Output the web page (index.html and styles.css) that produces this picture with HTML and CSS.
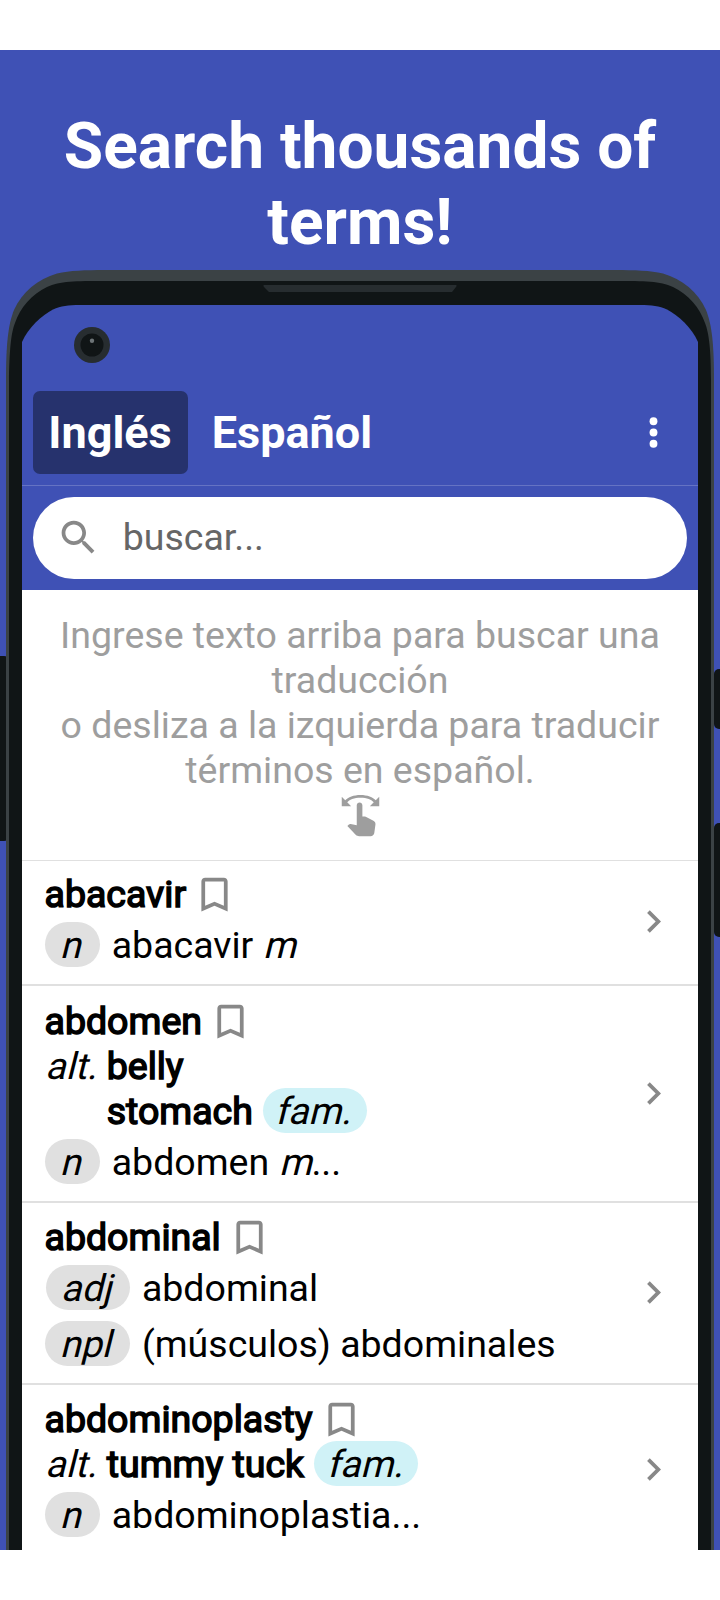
FILE: index.html
```html
<!DOCTYPE html>
<html lang="es">
<head>
<meta charset="utf-8">
<title>Search thousands of terms!</title>
<link rel="stylesheet" href="styles.css">
</head>
<body>
<svg class="defs" aria-hidden="true">
  <symbol id="bookmark" viewBox="0 0 24 24"><path d="M17 3H7c-1.1 0-1.99.9-1.99 2L5 21l7-3 7 3V5c0-1.1-.9-2-2-2zm0 15l-5-2.18L7 18V5h10v13z"/></symbol>
  <symbol id="chevron" viewBox="0 0 24 24"><path d="M10 6L8.59 7.41 13.17 12l-4.58 4.59L10 18l6-6z"/></symbol>
</svg>
<main class="poster">
  <h1 class="title">Search thousands of terms!</h1>
  <div class="phone">
    <svg class="shell" viewBox="0 0 720 1280" aria-hidden="true">
      <g fill="#101516">
        <rect x="-8" y="386" width="16" height="185" rx="4"/>
        <rect x="714" y="399" width="16" height="60" rx="5"/>
        <rect x="714" y="553" width="16" height="114" rx="5"/>
      </g>
      <path fill="#3b4245" d="M6 1280V110C6 75 8 55 14 40C22 22 38 9 57 3.5C70 .5 85 0 105 0H615C635 0 650 .5 663 3.5C682 9 698 22 706 40C712 55 714 75 714 110V1280z"/>
      <path fill="#101516" d="M9 1280V110C9.500 80 11 63 15 53C20 38 32 24 47 17C60 11 75 11 105 11H615C645 11 660 11 673 17C688 24 700 38 705 53C709 63 711 80 711 110V1280z"/>
      <path fill="#272d30" d="M264 15H456Q457.500 15.500 456 17L452 22H269L264 17Q262.500 15.500 264 15z"/>
      <path fill="#3f51b5" d="M22 120V72C28 58 42 45 53 39.500C61 36 68 35 80 35H640C652 35 659 36 667 39.500C678 45 692 58 698 72V120z"/>
      <circle cx="92" cy="75" r="18" fill="#272d30"/>
      <circle cx="92" cy="75" r="11.500" fill="#101516"/>
      <circle cx="92" cy="70.800" r="2.200" fill="#6d7477"/>
    </svg>
    <div class="screen">
      <header class="bar">
        <nav class="tabs">
          <span class="tab tab-on">Inglés</span>
          <span class="tab">Español</span>
        </nav>
        <svg class="icon more" viewBox="0 0 24 24"><circle cx="12" cy="6" r="2.100"/><circle cx="12" cy="12" r="2.100"/><circle cx="12" cy="18" r="2.100"/></svg>
      </header>
      <div class="search-bar">
        <div class="search">
          <svg class="icon" viewBox="0 0 24 24"><path d="M15.500 14h-.79l-.28-.27C15.410 12.590 16 11.110 16 9.500 16 5.910 13.090 3 9.500 3S3 5.910 3 9.500 5.910 16 9.500 16c1.610 0 3.090-.59 4.230-1.570l.27.28v.79l5 4.990L20.490 19l-4.990-5zm-6 0C7.010 14 5 11.990 5 9.500S7.010 5 9.500 5 14 7.010 14 9.500 11.990 14 9.500 14z"/></svg>
          <span class="placeholder">buscar...</span>
        </div>
      </div>
      <section class="hint">
        <p class="hint-text">Ingrese texto arriba para buscar una<br>traducción<br>o desliza a la izquierda para traducir<br>términos en español.</p>
        <svg class="icon swipe" viewBox="0 0 24 24"><path d="M18.890 14.750l-4.090-2.040c-.28-.14-.58-.21-.89-.21H13v-6C13 5.670 12.330 5 11.500 5S10 5.670 10 6.500v10.740L6.750 16.500c-.33-.07-.68.03-.92.28L5 17.620l4.540 4.790C9.920 22.790 10.680 23 11.210 23h6.160c1 0 1.840-.73 1.980-1.720l.63-4.460C20.100 15.970 19.660 15.140 18.890 14.750zM20.130 3.870C18.690 2.170 15.600 1 12 1S5.310 2.170 3.870 3.870L2 2v5h5L4.930 4.930c1-1.290 3.700-2.430 7.070-2.430s6.070 1.140 7.070 2.430L17 7h5V2L20.130 3.870z"/></svg>
      </section>
      <ul class="list">
        <li class="row">
          <div class="entry">
            <div class="head"><b class="term">abacavir</b><svg class="icon"><use href="#bookmark"/></svg></div>
            <div class="senses"><span class="chip"><i>n</i></span><span>abacavir <i>m</i></span></div>
          </div>
          <svg class="icon"><use href="#chevron"/></svg>
        </li>
        <li class="row">
          <div class="entry">
            <div class="head"><b class="term">abdomen</b><svg class="icon"><use href="#bookmark"/></svg></div>
            <div class="alts"><i>alt.</i><div><div class="alt-line"><b class="term">belly</b></div><div class="alt-line"><b class="term">stomach</b><span class="chip fam"><i>fam.</i></span></div></div></div>
            <div class="senses"><span class="chip"><i>n</i></span><span>abdomen <i>m</i>...</span></div>
          </div>
          <svg class="icon"><use href="#chevron"/></svg>
        </li>
        <li class="row">
          <div class="entry">
            <div class="head"><b class="term">abdominal</b><svg class="icon"><use href="#bookmark"/></svg></div>
            <div class="senses"><span class="chip adj"><i>adj</i></span><span>abdominal</span><span class="chip"><i>npl</i></span><span>(músculos) abdominales</span></div>
          </div>
          <svg class="icon"><use href="#chevron"/></svg>
        </li>
        <li class="row">
          <div class="entry">
            <div class="head"><b class="term">abdominoplasty</b><svg class="icon"><use href="#bookmark"/></svg></div>
            <div class="alts"><i>alt.</i><div class="alt-line"><b class="term">tummy tuck</b><span class="chip fam"><i>fam.</i></span></div></div>
            <div class="senses"><span class="chip"><i>n</i></span><span>abdominoplastia...</span></div>
          </div>
          <svg class="icon"><use href="#chevron"/></svg>
        </li>
      </ul>
    </div>
  </div>
</main>
</body>
</html>
```
FILE: styles.css
```css
* { box-sizing: border-box; }
body {
  margin: 0;
  padding: 50px 0;
  background: #fff;
  font-family: Roboto, "Liberation Sans", sans-serif;
}
.defs { display: none; }
.poster {
  height: 1500px;
  overflow: hidden;
  background: #3f51b5;
}
.title {
  height: 220px;
  margin: 0;
  padding: 59px 50px 0;
  color: #fff;
  font-size: 64px;
  font-weight: 700;
  line-height: 76px;
  text-align: center;
}
.phone { display: grid; height: 1280px; }
.shell {
  grid-area: 1 / 1;
  width: 720px;
  height: 1280px;
}
.screen {
  grid-area: 1 / 1;
  z-index: 1;
  margin: 110px 22px 0;
  font-size: 37.5px;
  line-height: 45px;
}
.icon {
  flex: none;
  width: 45px;
  height: 45px;
  fill: #888;
}
.bar {
  display: flex;
  align-items: flex-start;
  justify-content: space-between;
  height: 106px;
  padding: 11px 22.5px 0 11.3px;
  border-bottom: 1px solid #6573c3;
  background: #3f51b5;
}
.tabs { display: flex; gap: 9px; }
.tab {
  height: 83px;
  padding: 0 16px 0 15px;
  border-radius: 7px;
  color: #fff;
  font-size: 45px;
  font-weight: 700;
  line-height: 83px;
}
.tab-on { background: #26326d; }
.more { margin-top: 19px; fill: #fff; }
.search-bar { height: 104px; padding: 10.5px 11.2px; background: #3f51b5; }
.search {
  display: flex;
  align-items: center;
  gap: 22px;
  height: 82.5px;
  padding: 0 22.5px;
  border-radius: 42px;
  background: #fff;
}
.placeholder { color: #666; }
.hint {
  display: flex;
  flex-direction: column;
  align-items: center;
  height: 271px;
  padding-top: 23px;
  border-bottom: 1px solid #e0e0e0;
  background: #fff;
}
.hint-text {
  margin: 0;
  color: #9e9e9e;
  text-align: center;
  white-space: nowrap;
}
.swipe { fill: #9e9e9e; }
.list { margin: 0; padding: 0; list-style: none; background: #fff; }
.row {
  display: flex;
  align-items: center;
  justify-content: space-between;
  padding: 12px 22.5px 16px 22.5px;
  border-bottom: 2px solid #e0e0e0;
}
.row > .icon { position: relative; top: 1.5px; }
.row:first-child { padding-top: 11px; }
.row:nth-child(2) { padding-top: 13px; }
.row:last-child { border: 0; }
.head { display: flex; height: 45px; gap: 6px; }
.head .icon { margin-top: -0.5px; }
.term {
  font-weight: 400;
  -webkit-text-stroke: 1.5px #000;
}
/* Slanted upright letters, pivoting on the baseline */
i {
  display: inline-block;
  font-style: normal;
  transform: skewX(-14deg);
  transform-origin: 0 35px;
}
.alts { display: flex; gap: 10.5px; }
.alt-line { display: flex; height: 45px; gap: 10px; }
.senses {
  display: grid;
  grid-template-columns: max-content max-content;
  grid-auto-rows: 45px;
  justify-items: start;
  gap: 11px 11.5px;
  margin-top: 6px;
}
.chip {
  justify-self: end;
  height: 45px;
  margin-top: -1px;
  padding: 0 19.5px 0 15.5px;
  border-radius: 23px;
  background: #e0e0e0;
  line-height: 47px;
}
.adj { padding-left: 15px; padding-right: 19px; }
.fam { padding: 0 15.5px 0 12.5px; background: #d0f2f7; }
```
